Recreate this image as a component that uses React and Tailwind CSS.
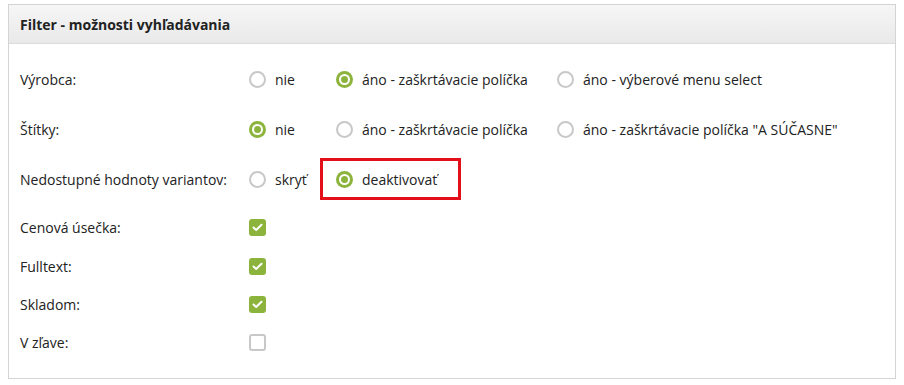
import React from 'react';

function Radio({ checked }) {
    return checked ? (
        <span className="w-[17px] h-[17px] rounded-full bg-[#8cb43c] flex items-center justify-center shrink-0">
            <span className="w-[11px] h-[11px] rounded-full bg-white flex items-center justify-center">
                <span className="w-[7px] h-[7px] rounded-full bg-[#8cb43c]" />
            </span>
        </span>
    ) : (
        <span className="block w-[17px] h-[17px] rounded-full border-2 border-[#c8c8c8] bg-white shrink-0" />
    );
}

function Checkbox({ checked }) {
    return checked ? (
        <span className="w-[17px] h-[17px] rounded-[3px] bg-[#8cb43c] flex items-center justify-center">
            <svg width="11" height="9" viewBox="0 0 11 9" fill="none">
                <path d="M1.5 4.5 L4.2 7 L9.5 1.8" stroke="white" strokeWidth="2" strokeLinecap="round" strokeLinejoin="round" />
            </svg>
        </span>
    ) : (
        <span className="w-[17px] h-[17px] rounded-[3px] border-2 border-[#c8c8c8] bg-white" />
    );
}

function Option({ checked, label, className = '' }) {
    return (
        <div className={`flex items-center gap-[9px] ${className}`}>
            <Radio checked={checked} />
            <span>{label}</span>
        </div>
    );
}

function Row({ label, children, className = '' }) {
    return (
        <div className={`flex items-center ${className}`}>
            <div className="w-[229px] shrink-0">{label}</div>
            <div className="flex items-center">{children}</div>
        </div>
    );
}

export default function App() {
    return (
        <div className="w-[904px] h-[385px] bg-white pt-[4px] px-[8px] text-[14px] text-[#222]" style={{ fontFamily: '"Open Sans", sans-serif' }}>
            <div className="border border-[#d4d4d4] h-[375px]">
                {/* Hlavička */}
                <div className="h-[39px] flex items-center pl-[11px] font-bold bg-gradient-to-b from-[#f6f6f6] to-[#e9e9e9] border-b border-[#dcdcdc]">
                    Filter - možnosti vyhľadávania
                </div>

                <div className="pl-[11px]">
                    <Row label="Výrobca:" className="h-[36px] mt-[17px]">
                        <Option label="nie" className="w-[87px]" />
                        <Option checked label="áno - zaškrtávacie políčka" className="w-[221px]" />
                        <Option label="áno - výberové menu select" />
                    </Row>
                    <Row label="Štítky:" className="h-[36px] mt-[14px]">
                        <Option checked label="nie" className="w-[87px]" />
                        <Option label="áno - zaškrtávacie políčka" className="w-[221px]" />
                        <Option label="áno - zaškrtávacie políčka &quot;A SÚČASNE&quot;" />
                    </Row>
                    <Row label="Nedostupné hodnoty variantov:" className="h-[42px] mt-[11px]">
                        <Option label="skryť" className="w-[71px]" />
                        <div className="border-[3px] border-[#e3101a] h-[42px] w-[141px] flex items-center pl-[13px]">
                            <Option checked label="deaktivovať" />
                        </div>
                    </Row>
                    <Row label="Cenová úsečka:" className="h-[30px] mt-[12px]">
                        <Checkbox checked />
                    </Row>
                    <Row label="Fulltext:" className="h-[30px] mt-[9px]">
                        <Checkbox checked />
                    </Row>
                    <Row label="Skladom:" className="h-[30px] mt-[8px]">
                        <Checkbox checked />
                    </Row>
                    <Row label="V zľave:" className="h-[30px] mt-[8px]">
                        <Checkbox />
                    </Row>
                </div>
            </div>
        </div>
    );
}
